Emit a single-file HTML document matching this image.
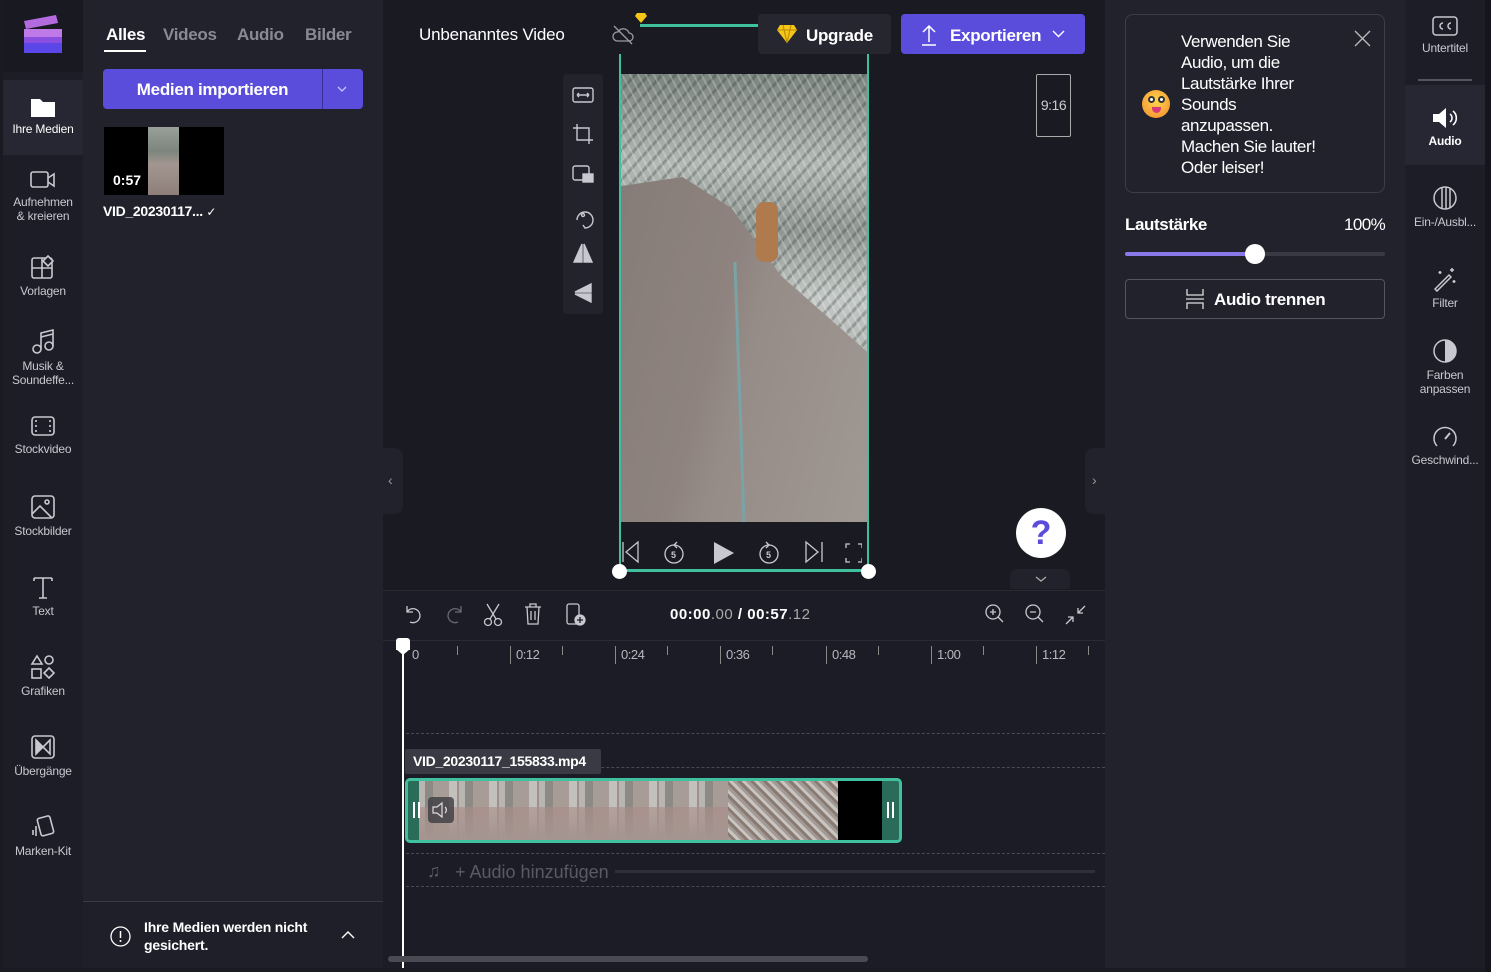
<!DOCTYPE html>
<html><head><meta charset="utf-8"><style>
*{margin:0;padding:0;box-sizing:border-box}
body{width:1491px;height:972px;background:#1a1a22;font-family:"Liberation Sans",sans-serif;color:#fff;position:relative;overflow:hidden}
.a{position:absolute}
.rail{left:3px;top:0;width:80px;height:968px;background:#1d1d28}
.ri{position:absolute;left:0;width:80px;text-align:center;font-size:12px;color:#c8c8d0;line-height:14px;letter-spacing:-.2px}
.ri svg{display:block;margin:0 auto 4px}
.panel{left:83px;top:0;width:300px;height:968px;background:#22222d}
.center{left:383px;top:0;width:722px;height:968px;background:#1a1a23}
.rpanel{left:1105px;top:0;width:300px;height:968px;background:#22222d}
.rrail{left:1405px;top:0;width:80px;height:968px;background:#1d1d28}
.tl{left:383px;top:590px;width:722px;height:378px;background:#1b1c25;border-top:1px solid #2a2a35}
.tick{position:absolute;top:646px;font-size:13px;color:#b8b8c0;border-left:1px solid #888;padding-left:5px;height:18px;line-height:18px;letter-spacing:-.5px}
.st{position:absolute;top:646px;width:1px;height:9px;background:#888}
.dash{position:absolute;left:406px;width:699px;border-top:1px dashed #4a4a55}
</style></head><body>
<div class="a rail"></div>
<div class="a" style="left:3px;top:0;width:80px;height:72px;background:#191922"></div>
<svg class="a" style="left:22px;top:13px" width="42" height="42" viewBox="0 0 42 42"><path d="M2 8 L34 2 L36 10 L4 16Z" fill="#b46be0"/><rect x="2" y="16" width="38" height="24" rx="2" fill="#8a4fe0"/><rect x="2" y="16" width="38" height="8" fill="#c07ae8"/><rect x="2" y="30" width="38" height="10" fill="#5b47e8"/></svg>
<div class="a" style="left:3px;top:80px;width:80px;height:75px;background:#272733"></div>
<div class="ri" style="left:3px;top:96px;color:#fff"><svg width="26" height="22" viewBox="0 0 26 22"><path d="M1 3h9l3 3h12v15H1z" fill="#fff"/></svg>Ihre Medien</div>
<div class="ri" style="left:3px;top:169px"><svg width="26" height="22" viewBox="0 0 26 22" fill="none" stroke="#c8c8d0" stroke-width="1.6"><rect x="1" y="3" width="17" height="15" rx="2"/><path d="M18 9l6-4v12l-6-4"/></svg>Aufnehmen<br>&amp; kreieren</div>
<div class="ri" style="left:3px;top:254px"><svg width="26" height="26" viewBox="0 0 26 26" fill="none" stroke="#c8c8d0" stroke-width="1.6"><rect x="2" y="4" width="20" height="20" rx="2"/><path d="M12 4v20M2 14h20"/><path d="M18 2l5 5-5 5-5-5z" fill="#1d1d28"/></svg>Vorlagen</div>
<div class="ri" style="left:3px;top:327px"><svg width="26" height="28" viewBox="0 0 26 28" fill="none" stroke="#c8c8d0" stroke-width="1.6"><circle cx="7" cy="22" r="4"/><circle cx="19" cy="19" r="4"/><path d="M11 22V6l12-3v16M11 10l12-3"/></svg>Musik &amp;<br>Soundeffe...</div>
<div class="ri" style="left:3px;top:414px"><svg width="26" height="24" viewBox="0 0 26 24" fill="none" stroke="#c8c8d0" stroke-width="1.6"><rect x="2" y="3" width="22" height="18" rx="3"/><path d="M6 6v2M6 11v2M6 16v2M20 6v2M20 11v2M20 16v2"/></svg>Stockvideo</div>
<div class="ri" style="left:3px;top:494px"><svg width="26" height="26" viewBox="0 0 26 26" fill="none" stroke="#c8c8d0" stroke-width="1.6"><rect x="2" y="2" width="22" height="22" rx="3"/><circle cx="17" cy="8" r="2"/><path d="M2 20l8-8 12 12"/></svg>Stockbilder</div>
<div class="ri" style="left:3px;top:574px"><svg width="26" height="26" viewBox="0 0 26 26" fill="none" stroke="#c8c8d0" stroke-width="1.6"><path d="M4 4h18M13 4v20M9 24h8M4 4v3M22 4v3"/></svg>Text</div>
<div class="ri" style="left:3px;top:654px"><svg width="26" height="26" viewBox="0 0 26 26" fill="none" stroke="#c8c8d0" stroke-width="1.6"><path d="M7 2l5 8H2z"/><circle cx="19" cy="6" r="4"/><rect x="2" y="15" width="9" height="9"/><path d="M19 14l5 5-5 5-5-5z"/></svg>Grafiken</div>
<div class="ri" style="left:3px;top:734px"><svg width="26" height="26" viewBox="0 0 26 26" fill="none" stroke="#c8c8d0" stroke-width="1.6"><rect x="2" y="2" width="22" height="22" rx="3"/><path d="M6 6l7 7-7 7z" fill="#c8c8d0"/><path d="M20 6l-7 7 7 7z"/></svg>Übergänge</div>
<div class="ri" style="left:3px;top:814px"><svg width="26" height="26" viewBox="0 0 26 26" fill="none" stroke="#c8c8d0" stroke-width="1.6"><rect x="9" y="3" width="13" height="18" rx="2" transform="rotate(-15 15 12)"/><path d="M6 12v10M3 16v5"/></svg>Marken-Kit</div>

<div class="a panel"></div>
<div class="a" style="left:106px;top:25px;font-size:17px;font-weight:bold;letter-spacing:-.3px">Alles</div>
<div class="a" style="left:104px;top:50px;width:42px;height:2px;background:#fff"></div>
<div class="a" style="left:163px;top:25px;font-size:17px;font-weight:bold;color:#8a8a95;letter-spacing:-.3px">Videos</div>
<div class="a" style="left:237px;top:25px;font-size:17px;font-weight:bold;color:#8a8a95;letter-spacing:-.3px">Audio</div>
<div class="a" style="left:305px;top:25px;font-size:17px;font-weight:bold;color:#8a8a95;letter-spacing:-.3px">Bilder</div>
<div class="a" style="left:103px;top:69px;width:260px;height:40px;background:#5b4ddb;border-radius:4px"></div>
<div class="a" style="left:322px;top:69px;width:1px;height:40px;background:#3a2f9a"></div>
<div class="a" style="left:103px;top:80px;width:219px;text-align:center;font-size:17px;font-weight:bold;letter-spacing:-.3px">Medien importieren</div>
<svg class="a" style="left:336px;top:85px" width="12" height="8" viewBox="0 0 12 8"><path d="M2 2l4 4 4-4" stroke="#c8c4ff" fill="none" stroke-width="1.3"/></svg>
<div class="a" style="left:104px;top:127px;width:120px;height:68px;background:#000"></div>
<div class="a" style="left:148px;top:127px;width:31px;height:68px;background:linear-gradient(180deg,#9aa09a 0%,#7d857e 35%,#a39590 55%,#8e7f7a 100%)"></div>
<div class="a" style="left:113px;top:172px;font-size:14px;font-weight:bold">0:57</div>
<div class="a" style="left:103px;top:203px;font-size:14px;font-weight:bold;letter-spacing:-.3px">VID_20230117... <span style="font-weight:normal;font-size:12px">✓</span></div>
<div class="a" style="left:83px;top:901px;width:300px;height:1px;background:#3a3a45"></div>
<div class="a" style="left:83px;top:902px;width:300px;height:66px;background:#1f1f29"></div>
<svg class="a" style="left:110px;top:926px" width="21" height="21" viewBox="0 0 21 21"><circle cx="10.5" cy="10.5" r="9.5" stroke="#fff" fill="none" stroke-width="1.3"/><path d="M10.5 5v7" stroke="#fff" stroke-width="1.5"/><circle cx="10.5" cy="15" r="1" fill="#fff"/></svg>
<div class="a" style="left:144px;top:918px;font-size:14px;font-weight:bold;line-height:18px;letter-spacing:-.2px">Ihre Medien werden nicht<br>gesichert.</div>
<svg class="a" style="left:341px;top:930px" width="14" height="9" viewBox="0 0 14 9"><path d="M1 8l6-6 6 6" stroke="#fff" fill="none" stroke-width="1.4"/></svg>

<div class="a center"></div>
<div class="a" style="left:419px;top:25px;font-size:17px;letter-spacing:-.2px">Unbenanntes Video</div>
<svg class="a" style="left:612px;top:25px" width="22" height="20" viewBox="0 0 22 20" fill="none" stroke="#9a9aa5" stroke-width="1.3"><path d="M5 16h12a4 4 0 0 0 0-8 6 6 0 0 0-11-1 4.5 4.5 0 0 0-1 9z"/><path d="M2 1l18 18"/></svg>
<div class="a" style="left:640px;top:24px;width:118px;height:3px;background:#3fc1a0"></div>
<svg class="a" style="left:635px;top:12px" width="12" height="12" viewBox="0 0 12 12"><path d="M2 1h8l2 3-6 7-6-7z" fill="#f5c518"/></svg>
<div class="a" style="left:758px;top:14px;width:133px;height:40px;background:#262631;border-radius:4px"></div>
<svg class="a" style="left:776px;top:24px" width="22" height="20" viewBox="0 0 22 20"><path d="M4 1h14l3 5-10 13L1 6z" fill="#f5c518"/><path d="M1 6h20M7 1l4 18M15 1l-4 18" stroke="#b58a00" stroke-width="1"/></svg>
<div class="a" style="left:806px;top:26px;font-size:17px;font-weight:bold;letter-spacing:-.3px">Upgrade</div>
<div class="a" style="left:901px;top:14px;width:184px;height:40px;background:#5b4ddb;border-radius:4px"></div>
<svg class="a" style="left:920px;top:24px" width="18" height="22" viewBox="0 0 18 22" fill="none" stroke="#fff" stroke-width="1.5"><path d="M9 18V2M3 8l6-6 6 6M2 21h14"/></svg>
<div class="a" style="left:950px;top:26px;font-size:17px;font-weight:bold;letter-spacing:-.3px">Exportieren</div>
<svg class="a" style="left:1052px;top:30px" width="13" height="8" viewBox="0 0 13 8"><path d="M1 1l5.5 5.5L12 1" stroke="#fff" fill="none" stroke-width="1.4"/></svg>
<div class="a" style="left:1036px;top:74px;width:35px;height:63px;border:1px solid #aaa;border-radius:2px;font-size:14px;color:#ccc;text-align:center;line-height:61px;letter-spacing:-.5px">9:16</div>

<div class="a" style="left:563px;top:74px;width:40px;height:240px;background:#23232e;border-radius:4px"></div>
<svg class="a" style="left:571px;top:84px" width="24" height="220" viewBox="0 0 24 220" fill="none" stroke="#c8c8d0" stroke-width="1.4"><rect x="2" y="4" width="20" height="14" rx="2"/><path d="M6 11h12M6 11l2-2M6 11l2 2M18 11l-2-2M18 11l-2 2"/><path d="M6 40v16h16M2 44h16v16"/><rect x="2" y="82" width="16" height="14" rx="2"/><rect x="12" y="90" width="10" height="8" fill="#c8c8d0"/><path d="M6 136a8 8 0 1 1 8 8l-2-3"/><circle cx="12" cy="131" r="1.5"/><path d="M11 160v18H3zM13 160v18h8z" fill="#c8c8d0"/><path d="M20 200L4 208h16zM20 210v8L4 210z" fill="#c8c8d0"/></svg>

<div class="a" style="left:619px;top:54px;width:2px;height:517px;background:#3fc1a0"></div>
<div class="a" style="left:867px;top:54px;width:2px;height:517px;background:#3fc1a0"></div>
<div class="a" style="left:619px;top:569px;width:250px;height:3px;background:#3fc1a0"></div>
<div class="a" style="left:621px;top:74px;width:246px;height:448px;background:repeating-linear-gradient(62deg,rgba(255,255,255,.22) 0 2px,transparent 2px 7px),repeating-linear-gradient(-48deg,rgba(40,55,48,.28) 0 3px,transparent 3px 10px),linear-gradient(180deg,#7a837d 0%,#b4b9b6 20%,#8f9792 35%,#c4c8c6 50%,#a9adaa 70%,#b9bbb9 100%)"></div>
<div class="a" style="left:621px;top:74px;width:246px;height:448px;background:linear-gradient(105deg,#857b76 0%,#8e837e 45%,#968c87 55%,#a09893 100%);clip-path:polygon(0 25%,25% 23%,45% 30%,65% 45%,100% 62%,100% 100%,0 100%)"></div>
<div class="a" style="left:756px;top:202px;width:22px;height:60px;background:#b07a4f;border-radius:8px"></div>
<div class="a" style="left:738px;top:262px;width:3px;height:260px;background:#7aa3a5;transform:skewX(2deg)"></div>
<div class="a" style="left:621px;top:522px;width:246px;height:47px;background:#1a1a23"></div>
<svg class="a" style="left:622px;top:540px" width="240" height="26" viewBox="0 0 240 26" fill="none" stroke="#c8c8d0" stroke-width="1.3"><path d="M1 2v20M16 2L4 12l12 10z"/><circle cx="52" cy="14" r="9"/><path d="M52 5l3-3M52 5l3 3"/><text x="49" y="18" font-size="9" fill="#c8c8d0" stroke="none" font-family="Liberation Sans" font-weight="bold">5</text><path d="M92 2v22l20-11z" fill="#c8c8d0" stroke="none"/><circle cx="147" cy="14" r="9"/><path d="M147 5l-3-3M147 5l-3 3"/><text x="144" y="18" font-size="9" fill="#c8c8d0" stroke="none" font-family="Liberation Sans" font-weight="bold">5</text><path d="M184 2l12 10-12 10zM200 2v20"/><path d="M228 4h-4v4M236 4h4v4M228 22h-4v-4M236 22h4v-4"/></svg>
<div class="a" style="left:612px;top:564px;width:15px;height:15px;border-radius:50%;background:#fff"></div>
<div class="a" style="left:861px;top:564px;width:15px;height:15px;border-radius:50%;background:#fff"></div>
<div class="a" style="left:1016px;top:508px;width:50px;height:50px;border-radius:50%;background:#fff;text-align:center;font-size:34px;font-weight:bold;color:#5b4ddb;line-height:50px">?</div>
<div class="a" style="left:1010px;top:569px;width:60px;height:20px;background:#22222c;border-radius:8px 8px 0 0"></div>
<svg class="a" style="left:1035px;top:576px" width="12" height="7" viewBox="0 0 12 7"><path d="M1 1l5 4 5-4" stroke="#aaa" fill="none" stroke-width="1.3"/></svg>
<div class="a" style="left:383px;top:448px;width:20px;height:66px;background:#22222c;border-radius:0 8px 8px 0"></div>
<div class="a" style="left:388px;top:472px;font-size:14px;color:#999">‹</div>
<div class="a" style="left:1085px;top:448px;width:20px;height:66px;background:#22222c;border-radius:8px 0 0 8px"></div>
<div class="a" style="left:1092px;top:472px;font-size:14px;color:#999">›</div>

<div class="a tl"></div>
<svg class="a" style="left:403px;top:602px" width="190" height="26" viewBox="0 0 190 26" fill="none" stroke="#c8c8d0" stroke-width="1.3"><path d="M4 4v6h6M4 10a7 7 0 1 1 3 10"/><path d="M58 4v6h-6M58 10a7 7 0 1 0-3 10" stroke="#6a6a75"/><circle cx="85" cy="20" r="3.5"/><circle cx="95" cy="20" r="3.5"/><path d="M87 17l9-15M93 17L84 2"/><path d="M122 5h16M127 5V2h6v3M124 5l1 17h10l1-17M128 9v9M132 9v9"/><rect x="164" y="2" width="12" height="20" rx="2"/><circle cx="177" cy="18" r="5" fill="#c8c8d0"/><path d="M177 15v6M174 18h6" stroke="#1b1c25"/></svg>
<div class="a" style="left:670px;top:606px;font-size:15px;font-weight:bold;letter-spacing:.5px">00:00<span style="color:#aaa;font-weight:normal">.00</span> / 00:57<span style="color:#aaa;font-weight:normal">.12</span></div>
<svg class="a" style="left:984px;top:603px" width="104" height="24" viewBox="0 0 104 24" fill="none" stroke="#c8c8d0" stroke-width="1.3"><circle cx="9" cy="9" r="7"/><path d="M14 14l5 5M9 6v6M6 9h6"/><circle cx="49" cy="9" r="7"/><path d="M54 14l5 5M46 9h6"/><path d="M82 21l7-7M84 14h5v5M101 3l-7 7M94 5v5h5"/></svg>
<div class="a" style="left:383px;top:640px;width:722px;height:1px;background:#2a2a35"></div>
<div class="tick" style="left:407px;border:none">0</div>
<div class="st" style="left:457px"></div>
<div class="tick" style="left:510px">0:12</div><div class="st" style="left:562px"></div>
<div class="tick" style="left:615px">0:24</div><div class="st" style="left:667px"></div>
<div class="tick" style="left:720px">0:36</div><div class="st" style="left:772px"></div>
<div class="tick" style="left:826px">0:48</div><div class="st" style="left:878px"></div>
<div class="tick" style="left:931px">1:00</div><div class="st" style="left:983px"></div>
<div class="tick" style="left:1036px">1:12</div><div class="st" style="left:1088px"></div>
<div class="dash" style="top:733px"></div>
<div class="dash" style="top:767px"></div>
<div class="dash" style="top:853px"></div>
<div class="dash" style="top:886px"></div>
<div class="a" style="left:405px;top:749px;width:196px;height:25px;background:#3a3a44;border-radius:2px"></div>
<div class="a" style="left:413px;top:753px;font-size:14px;font-weight:bold;letter-spacing:-.3px">VID_20230117_155833.mp4</div>
<div class="a" style="left:405px;top:778px;width:497px;height:65px;border:3px solid #3fc1a0;border-radius:5px;background:#2b6b5a;overflow:hidden">
<div style="position:absolute;left:11px;top:0;width:312px;height:59px;background:repeating-linear-gradient(90deg,#b9b5b1 0 6px,#8d8a86 6px 14px,#a89c97 14px 30px,#c3c1be 30px 38px,#9e918c 38px 40px)"></div>
<div style="position:absolute;left:11px;top:26px;width:312px;height:33px;background:linear-gradient(180deg,rgba(170,140,135,.6),#a49590)"></div>
<div style="position:absolute;left:320px;top:0;width:110px;height:59px;background:repeating-linear-gradient(45deg,#a39a95 0 3px,#8a7b72 3px 6px,#c8c4c0 6px 9px)"></div>
<div style="position:absolute;left:430px;top:0;width:44px;height:59px;background:#000"></div>
</div>
<div class="a" style="left:413px;top:802px;height:16px;border-left:2px solid #fff;border-right:2px solid #fff;width:7px"></div>
<div class="a" style="left:428px;top:797px;width:26px;height:26px;background:rgba(60,60,65,.8);border-radius:4px"></div>
<svg class="a" style="left:431px;top:801px" width="20" height="18" viewBox="0 0 20 18" fill="none" stroke="#ddd" stroke-width="1.2"><path d="M2 6h4l5-4v14l-5-4H2z"/><path d="M14 6a4 4 0 0 1 0 6"/></svg>
<div class="a" style="left:887px;top:802px;height:16px;border-left:2px solid #fff;border-right:2px solid #fff;width:7px"></div>
<div class="a" style="left:427px;top:861px;font-size:18px;color:#5a5a65">♫</div>
<div class="a" style="left:455px;top:862px;font-size:18px;color:#5a5a65">+ Audio hinzufügen</div>
<div class="a" style="left:615px;top:870px;width:480px;height:3px;background:#2f2f39"></div>
<div class="a" style="left:402px;top:645px;width:2px;height:323px;background:#fff"></div>
<div class="a" style="left:396px;top:638px;width:14px;height:12px;background:#fff;border-radius:3px 3px 0 0"></div>
<div class="a" style="left:396px;top:649px;width:0;height:0;border-left:7px solid transparent;border-right:7px solid transparent;border-top:6px solid #fff"></div>
<div class="a" style="left:388px;top:956px;width:480px;height:6px;background:#4a4a55;border-radius:3px"></div>

<div class="a rpanel"></div>
<div class="a" style="left:1125px;top:14px;width:260px;height:179px;border:1px solid #3d3d48;border-radius:8px"></div>
<div class="a" style="left:1142px;top:90px;width:28px;height:28px;border-radius:50%;background:radial-gradient(circle at 50% 40%,#ffd54a,#f28a2e)"></div>
<div class="a" style="left:1148px;top:96px;width:7px;height:7px;border-radius:50%;background:#fff;border:2px solid #333"></div>
<div class="a" style="left:1158px;top:96px;width:7px;height:7px;border-radius:50%;background:#fff;border:2px solid #333"></div>
<div class="a" style="left:1152px;top:107px;width:9px;height:6px;border-radius:0 0 5px 5px;background:#d63a7a"></div>
<div class="a" style="left:1181px;top:31px;font-size:17px;line-height:21px;white-space:nowrap;letter-spacing:-.4px">Verwenden Sie<br>Audio, um die<br>Lautstärke Ihrer<br>Sounds<br>anzupassen.<br>Machen Sie lauter!<br>Oder leiser!</div>
<svg class="a" style="left:1354px;top:30px" width="17" height="17" viewBox="0 0 17 17"><path d="M1 1l15 15M16 1L1 16" stroke="#bbb" stroke-width="1.3"/></svg>
<div class="a" style="left:1125px;top:215px;font-size:17px;font-weight:bold;letter-spacing:-.4px">Lautstärke</div>
<div class="a" style="left:1344px;top:215px;font-size:17px;letter-spacing:-.6px">100%</div>
<div class="a" style="left:1125px;top:252px;width:260px;height:4px;background:#3a3a45;border-radius:2px"></div>
<div class="a" style="left:1125px;top:252px;width:130px;height:4px;background:#8878e8;border-radius:2px"></div>
<div class="a" style="left:1245px;top:244px;width:20px;height:20px;border-radius:50%;background:#fff"></div>
<div class="a" style="left:1125px;top:279px;width:260px;height:40px;border:1px solid #55555f;border-radius:4px"></div>
<svg class="a" style="left:1185px;top:288px" width="20" height="22" viewBox="0 0 20 22" fill="none" stroke="#ddd" stroke-width="1.3"><path d="M2 1v6h16V1M2 21v-6h16v6M1 11h18" /></svg>
<div class="a" style="left:1214px;top:290px;font-size:17px;font-weight:bold;letter-spacing:-.3px">Audio trennen</div>

<div class="a rrail"></div>
<div class="a" style="left:1485px;top:0;width:6px;height:972px;background:#15151b"></div>
<div class="a" style="left:1405px;top:85px;width:80px;height:80px;background:#272733"></div>
<div class="a" style="left:1418px;top:79px;width:54px;height:2px;background:#55555f"></div>
<div class="ri" style="left:1405px;top:15px"><svg width="26" height="22" viewBox="0 0 26 22" fill="none" stroke="#c8c8d0" stroke-width="1.5"><rect x="1" y="2" width="24" height="18" rx="3"/><path d="M11 8a3 3 0 1 0 0 6M19 8a3 3 0 1 0 0 6"/></svg>Untertitel</div>
<div class="ri" style="left:1405px;top:106px;color:#fff;font-weight:bold"><svg width="28" height="24" viewBox="0 0 28 24"><path d="M2 8h6l7-6v20l-7-6H2z" fill="#fff"/><path d="M19 8a5 5 0 0 1 0 8M22 5a9 9 0 0 1 0 14" stroke="#fff" fill="none" stroke-width="1.6"/></svg>Audio</div>
<div class="ri" style="left:1405px;top:185px"><svg width="26" height="26" viewBox="0 0 26 26" fill="none" stroke="#c8c8d0" stroke-width="1.5"><circle cx="13" cy="13" r="11"/><path d="M10 3v20M14 2v22M18 3v20"/></svg>Ein-/Ausbl...</div>
<div class="ri" style="left:1405px;top:266px"><svg width="26" height="26" viewBox="0 0 26 26" fill="none" stroke="#c8c8d0" stroke-width="1.5"><path d="M3 23l14-14 2 2-14 14zM20 2v4M18 4h4M8 5v3M6.5 6.5h3M22 14v3M20.5 15.5h3"/></svg>Filter</div>
<div class="ri" style="left:1405px;top:338px"><svg width="26" height="26" viewBox="0 0 26 26"><circle cx="13" cy="13" r="11" fill="none" stroke="#c8c8d0" stroke-width="1.5"/><path d="M13 2a11 11 0 0 1 0 22z" fill="#c8c8d0"/></svg>Farben<br>anpassen</div>
<div class="ri" style="left:1405px;top:425px"><svg width="26" height="24" viewBox="0 0 26 24" fill="none" stroke="#c8c8d0" stroke-width="1.5"><path d="M5 21a11 11 0 1 1 16 0"/><path d="M13 14l5-6" stroke-width="2"/></svg>Geschwind...</div>
</body></html>
